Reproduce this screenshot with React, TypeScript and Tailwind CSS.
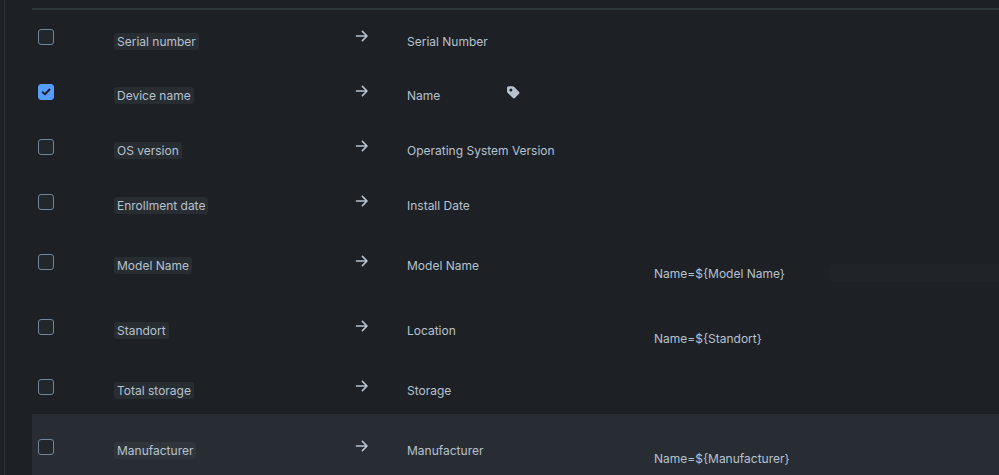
import React from 'react'

type Mapping = {
  source: string
  target: string
  checked?: boolean
  isLabel?: boolean
  value?: string
  hasInput?: boolean
  active?: boolean
}

const mappings: Mapping[] = [
  { source: 'Serial number', target: 'Serial Number' },
  { source: 'Device name', target: 'Name', checked: true, isLabel: true },
  { source: 'OS version', target: 'Operating System Version' },
  { source: 'Enrollment date', target: 'Install Date' },
  { source: 'Model Name', target: 'Model Name', value: 'Name=${Model Name}', hasInput: true },
  { source: 'Standort', target: 'Location', value: 'Name=${Standort}' },
  { source: 'Total storage', target: 'Storage' },
  { source: 'Manufacturer', target: 'Manufacturer', value: 'Name=${Manufacturer}', active: true },
]

const ArrowIcon = () => (
  <svg className="block size-4" viewBox="0 0 16 16" fill="none" stroke="currentColor" strokeWidth="1.6" strokeLinecap="round" strokeLinejoin="round" aria-hidden="true">
    <path d="M2.5 8h10.2M8.4 3.4 13 8l-4.6 4.6" />
  </svg>
)

const TagIcon = () => (
  <svg className="block size-4" viewBox="0 0 16 16" fill="currentColor" role="img" aria-label="Label attribute">
    <path fillRule="evenodd" d="M3.7 2.2h3.8c.6 0 1.1.2 1.5.6l5.1 5.1c.6.6.6 1.3 0 1.9l-4.2 4.3c-.6.6-1.3.6-1.9 0L2.7 8.9c-.4-.4-.7-.9-.7-1.5V4c0-1 .7-1.8 1.7-1.8ZM5.9 4.5a1.5 1.5 0 1 0 0 3 1.5 1.5 0 0 0 0-3Z" />
  </svg>
)

const Checkbox = ({ id, checked }: { id: string; checked?: boolean }) => (
  <div className="relative size-4">
    <input
      id={id}
      type="checkbox"
      defaultChecked={checked}
      className="peer block size-4 appearance-none rounded-[3px] border border-[#738496] bg-[#22272b] checked:border-[#579dff] checked:bg-[#579dff]"
    />
    <svg className="pointer-events-none absolute inset-0 hidden size-4 text-[#1d2125] peer-checked:block" viewBox="0 0 16 16" fill="none" stroke="currentColor" strokeWidth="2" strokeLinecap="round" strokeLinejoin="round" aria-hidden="true">
      <path d="M4.7 8.2 7 10.4l4.5-4.9" />
    </svg>
  </div>
)

const MappingRow = ({ item, id }: { item: Mapping; id: string }) => (
  <tr className={`${item.value ? 'h-[65px]' : 'h-[55px]'} ${item.active ? 'bg-[#282d33]' : ''}`}>
    <td className="pl-1.5">
      <Checkbox id={id} checked={item.checked} />
    </td>
    <td className="pt-2">
      <label htmlFor={id} className={`block w-fit rounded-[3px] px-[3px] leading-[17px] ${item.active ? 'bg-[#30353b]' : 'bg-[#282d32]'}`}>{item.source}</label>
    </td>
    <td className="pb-0.5">
      <ArrowIcon />
    </td>
    <td className="pt-2">{item.target}</td>
    <td>{item.isLabel && <TagIcon />}</td>
    <td className="pt-6">{item.value}</td>
    <td className="pt-[22px]">
      {item.hasInput && <input type="text" aria-label="Reference value" className="block h-[18px] w-full rounded-l-sm bg-[#202428]" />}
    </td>
  </tr>
)

const App = () => {
  return (
    <div className="min-h-screen bg-[#1d2125] pl-1 font-['Inter',sans-serif] text-[12px] leading-[17px] text-[#b6c2cf]">
      <main className="min-h-screen border-l border-[#2c3338] pl-[27px]">
        <table className="w-full table-fixed border-collapse text-left">
          <colgroup>
            <col className="w-[82px]" />
            <col className="w-[240px]" />
            <col className="w-[53px]" />
            <col className="w-[98px]" />
            <col className="w-[149px]" />
            <col className="w-[175px]" />
            <col />
          </colgroup>
          <thead>
            <tr className="h-[9px] border-b-2 border-[#2c383b]">
              <th colSpan={7}></th>
            </tr>
          </thead>
          <tbody className="whitespace-nowrap">
            {mappings.map((item, i) => (
              <MappingRow key={item.source} item={item} id={`mapping-${i}`} />
            ))}
          </tbody>
        </table>
      </main>
    </div>
  )
}

export default App
